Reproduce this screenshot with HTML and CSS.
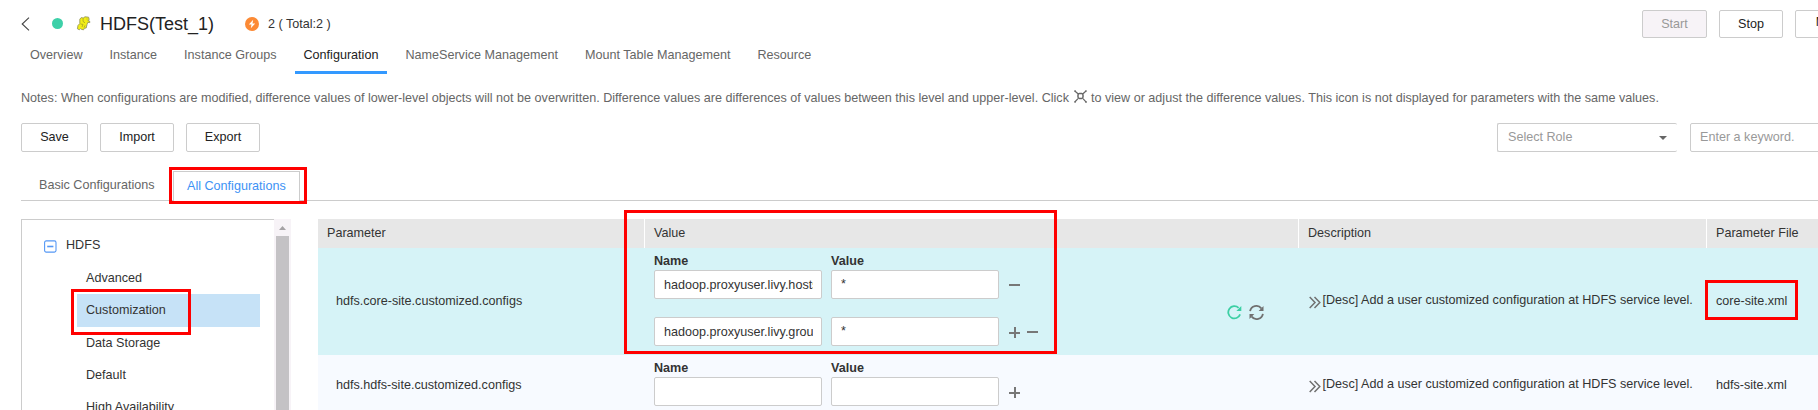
FILE: index.html
```html
<!DOCTYPE html>
<html lang="en">
<head>
<meta charset="utf-8">
<title>HDFS Configuration</title>
<link rel="stylesheet" href="styles.css">
</head>
<body>
<div class="page">
  <header class="header">
    <svg class="back" width="9" height="14" viewBox="0 0 9 14"><path d="M8 .7 1.2 7 8 13.3" fill="none" stroke="#444" stroke-width="1.1"/></svg>
    <span class="dot"></span>
    <svg class="elephant" width="15" height="15" viewBox="0 0 15 15"><path d="M5.2 1.6 7.2 2 9 .8 12.6 1.2 13.2 3.6 11.8 4.6 13.6 5 13.8 6.6 11.8 6.4 11 8.6 10.2 12 8.4 12.2 7.6 13.8 5.6 13.4 4.6 12.6 3.4 13.8 1.4 12.8 2 9.4 3.8 7.6 3.8 3.2Z" fill="#f2ee14" stroke="#8c8c58" stroke-width=".8"/><path d="M7.2 2.2 7 5.4 9 6.8M4.5 8 7 8.4 6 11M9 9.4 8 11.6M10.5 3h1" fill="none" stroke="#a5a126" stroke-width=".8"/></svg>
    <h1 class="title">HDFS(Test_1)</h1>
    <svg class="alarm" width="14" height="14" viewBox="0 0 14 14"><circle cx="7" cy="7" r="7" fill="#fc8a35"/><path d="M8.2 2.8 3.8 7.6h2.7L5.8 11.2l4.4-4.8H7.5Z" fill="#fff"/></svg>
    <span class="count">2 ( Total:2 )</span>
    <div class="actions">
      <button class="btn disabled start">Start</button>
      <button class="btn stop">Stop</button>
      <button class="btn more">More</button>
    </div>
  </header>
  <nav class="tabs">
    <a class="tab">Overview</a><a class="tab">Instance</a><a class="tab">Instance Groups</a><a class="tab active">Configuration</a><a class="tab">NameService Management</a><a class="tab">Mount Table Management</a><a class="tab">Resource</a>
  </nav>
  <p class="notes"><span class="before">Notes: When configurations are modified, difference values of lower-level objects will not be overwritten. Difference values are differences of values between this level and upper-level. Click</span>
    <svg class="diff" width="13" height="13" viewBox="0 0 13 13" fill="none" stroke="#666"><rect x="4" y="3.5" width="5" height="5" rx="1.4" stroke-width="1.5"/><path d="M.8 1 4 3.8M12 1 9 3.8M.8 12 4 8.6M12.4 12.4 9 8.6" stroke-width="1.2"/><path d="M0 1h2M11 1h2M0 12h2M11 12h2" stroke-width="1.2"/></svg>
    <span class="after">to view or adjust the difference values. This icon is not displayed for parameters with the same values.</span></p>
  <div class="toolbar">
    <button class="btn save">Save</button>
    <button class="btn wide">Import</button>
    <button class="btn wide">Export</button>
    <div class="filters">
      <div class="select">Select Role<span class="caret"></span></div>
      <div class="search">Enter a keyword.</div>
    </div>
  </div>
  <div class="subtabs">
    <a class="subtab">Basic Configurations</a>
    <a class="subtab current">All Configurations</a>
  </div>
  <main class="content">
    <aside class="side">
      <div class="tree">
        <div class="root"><svg width="13" height="13" viewBox="0 0 13 13" fill="none" stroke="#5598f5"><rect x=".6" y=".9" width="11.4" height="11.2" rx="1.6" stroke-width="1.1"/><path d="M3.2 6.5h6.2" stroke-width="1.6"/></svg>HDFS</div>
        <a class="leaf">Advanced</a>
        <a class="leaf selected">Customization</a>
        <a class="leaf">Data Storage</a>
        <a class="leaf">Default</a>
        <a class="leaf">High Availability</a>
      </div>
      <div class="scroll"><span class="up"></span><span class="thumb"></span></div>
    </aside>
    <section class="table">
      <div class="row head"><div>Parameter</div><div>Value</div><div>Description</div><div>Parameter File</div></div>
      <div class="row first">
        <div class="name">hdfs.core-site.customized.configs</div>
        <div class="value">
          <div class="pairs">
            <div class="labels"><b>Name</b><b>Value</b></div>
            <div class="pair"><div class="field"><span>hadoop.proxyuser.livy.hosts</span></div><div class="field star"><span>*</span></div><i class="minus"></i></div>
            <div class="pair"><div class="field"><span>hadoop.proxyuser.livy.groups</span></div><div class="field star"><span>*</span></div><i class="plus"></i><i class="minus second"></i></div>
          </div>
          <div class="tools">
            <svg width="15" height="15" viewBox="0 0 15 15"><path d="M13.1 9.4A6.1 6.1 0 1 1 11.6 2.9" fill="none" stroke="#3ccfa4" stroke-width="1.8"/><path d="M14.3 1v5H9.4Z" fill="#3ccfa4"/></svg>
            <svg width="15" height="15" viewBox="0 0 15 15"><path d="M1.1 6.2A6.3 6.3 0 0 1 12.3 3.4M13.9 8.8A6.3 6.3 0 0 1 2.7 11.6" fill="none" stroke="#707070" stroke-width="1.8"/><path d="M14.5 1v5H9.7ZM.5 14V9h4.8Z" fill="#707070"/></svg>
          </div>
        </div>
        <div class="desc"><svg width="12" height="13" viewBox="0 0 12 13"><path d="M.7 1 6 6.5.7 12M5.5 1l5.3 5.5L5.5 12" fill="none" stroke="#707070" stroke-width="1.5"/></svg><span>[Desc] Add a user customized configuration at HDFS service level.</span></div>
        <div class="file">core-site.xml</div>
      </div>
      <div class="row second-row">
        <div class="name">hdfs.hdfs-site.customized.configs</div>
        <div class="value">
          <div class="pairs">
            <div class="labels"><b>Name</b><b>Value</b></div>
            <div class="pair"><div class="field"></div><div class="field"></div><i class="plus"></i></div>
          </div>
        </div>
        <div class="desc"><svg width="12" height="13" viewBox="0 0 12 13"><path d="M.7 1 6 6.5.7 12M5.5 1l5.3 5.5L5.5 12" fill="none" stroke="#707070" stroke-width="1.5"/></svg><span>[Desc] Add a user customized configuration at HDFS service level.</span></div>
        <div class="file">hdfs-site.xml</div>
      </div>
    </section>
  </main>
  <div class="mark mark-tab"></div>
  <div class="mark mark-tree"></div>
  <div class="mark mark-value"></div>
  <div class="mark mark-file"></div>
</div>
</body>
</html>
```
FILE: styles.css
```css
* { box-sizing: border-box; }
body { margin: 0; background: #fff; overflow: hidden; }
.page {
  position: relative;
  width: 1818px;
  height: 410px;
  overflow: hidden;
  font: 12.6px/16px "Liberation Sans", Arial, sans-serif;
  color: #333;
  white-space: nowrap;
}
.header { display: flex; height: 46px; padding: 10px 0 0 21px; }
.back { margin-top: 7px; }
.dot { width: 11px; height: 11px; margin: 8px 0 0 22px; border-radius: 50%; background: #3dd0a8; }
.elephant { margin: 6px 0 0 13px; }
.title { margin: 4px 0 0 9px; width: 137px; font-size: 18px; line-height: 21px; font-weight: normal; color: #222; }
.alarm { margin: 7px 0 0 8px; }
.count { margin: 6px 0 0 9px; }
.actions { display: flex; gap: 12px; width: 176px; margin-left: auto; }
.btn {
  flex: none;
  height: 29px;
  padding: 0 0 2px;
  border: 1px solid #ccc;
  border-radius: 2px;
  background: #fff;
  font: inherit;
  color: #222;
}
.actions .btn { height: 28px; padding-bottom: 1px; }
.start { width: 65px; }
.stop { width: 64px; }
.more { width: 70px; }
.actions .more { padding-bottom: 4px; }
.btn.disabled { background: #f7f3f7; color: #999; }
.tabs { display: flex; height: 28px; padding-left: 21px; }
.tab { padding: 1px 9px 0; margin-right: 9px; color: #666; }
.tab.active { border-bottom: 3px solid #3399ff; color: #222; }
.notes { display: flex; height: 49px; margin: 0; padding: 16px 0 0 21px; color: #666; }
.diff { margin: 0 4px 0 5px; }
.toolbar { display: flex; gap: 12px; height: 48px; padding-left: 21px; }
.save { width: 67px; }
.wide { width: 74px; }
.filters { display: flex; gap: 13px; width: 321px; margin-left: auto; color: #999; }
.select, .search { height: 29px; padding: 5px 10px; border: 1px solid #ccc; border-radius: 2px; }
.select { display: flex; flex: none; width: 180px; border-right: 0; }
.search { flex: none; width: 180px; padding-left: 9px; }
.caret { width: 8px; margin: 7px 0 0 auto; height: 4px; background: #666; clip-path: polygon(0 0, 100% 0, 50% 100%); }
.subtabs { display: flex; height: 30px; margin-left: 21px; border-bottom: 1px solid #ccc; }
.subtab { width: 152px; padding: 6px 0 0 18px; color: #666; }
.subtab.current { width: 127px; height: 30px; padding: 6px 0 0 13px; border: 1px solid #ccc; border-bottom: 0; background: #fff; color: #3d92f5; }
.content { display: flex; height: 209px; padding: 18px 0 0 21px; }
.side { display: flex; flex: none; width: 270px; margin-right: 27px; }
.tree { width: 253px; padding-top: 17px; border: solid #ccc; border-width: 1px 0 0 1px; }
.root { display: flex; gap: 9px; height: 25px; padding-left: 22px; }
.root svg { margin-top: 3px; }
.leaf { display: block; width: 183px; height: 32.3px; margin-left: 55px; padding: 8px 0 0 9px; }
.leaf.selected { background: #c6e2f7; }
.scroll { width: 17px; background: #f7f3f7; padding: 7px 2px 0; }
.up { display: block; width: 7px; height: 4px; margin: 0 0 6px 3px; background: #a5a2a5; clip-path: polygon(50% 0, 100% 100%, 0 100%); }
.thumb { display: block; width: 13px; height: 180px; background: #c4c2c5; }
.table { flex: none; width: 1500px; }
.row { display: grid; grid-template-columns: 327px 654px 408px 111px; background: #f7faff; }
.head { height: 29px; background: #e7e7e7; }
.head div { padding: 6px 0 0 9px; border-right: 1px solid #fff; }
.head div:last-child { border-right: 0; }
.row.first { height: 107px; background: #d6f3f7; }
.second-row { height: 60px; }
.name { padding: 45px 0 0 18px; }
.second-row .name { padding-top: 22px; }
.value { display: flex; padding: 4px 0 0 9px; }
.pairs { width: 454px; }
.labels { display: flex; height: 18px; padding-top: 1px; }
.labels b { width: 177px; }
.pair { display: flex; gap: 9px; height: 47px; }
.field { flex: none; width: 168px; height: 29px; padding: 6px 9px; border: 1px solid #ccc; border-radius: 2px; background: #fff; }
.field span { display: block; width: 149px; overflow: hidden; }
.star { padding-top: 5px; }
.plus, .minus { flex: none; width: 11px; height: 11px; margin: 10px 0 0 1px; background: linear-gradient(#777, #777) 0 5px / 11px 2px no-repeat; }
.minus { margin-top: 9px; }
.plus { background: linear-gradient(#777, #777) 0 5px / 11px 2px no-repeat, linear-gradient(#777, #777) 5px 0 / 2px 11px no-repeat; }
.minus.second { margin-left: -2px; }
.tools { display: flex; gap: 7px; margin: 53px 0 0 119px; }
.desc { display: flex; padding: 44px 0 0 10px; }
.desc svg { margin: 4px 1.5px 0 0; }
.second-row .desc { padding-top: 21px; }
.file { padding: 45px 0 0 9px; }
.second-row .file { padding-top: 22px; }
.mark { position: absolute; border: 3px solid #f00; }
.mark-tab { left: 169px; top: 167px; width: 138px; height: 37px; }
.mark-tree { left: 71px; top: 289px; width: 120px; height: 46px; }
.mark-value { left: 624px; top: 210px; width: 433px; height: 144px; }
.mark-file { left: 1705px; top: 280px; width: 93px; height: 40px; }
```
